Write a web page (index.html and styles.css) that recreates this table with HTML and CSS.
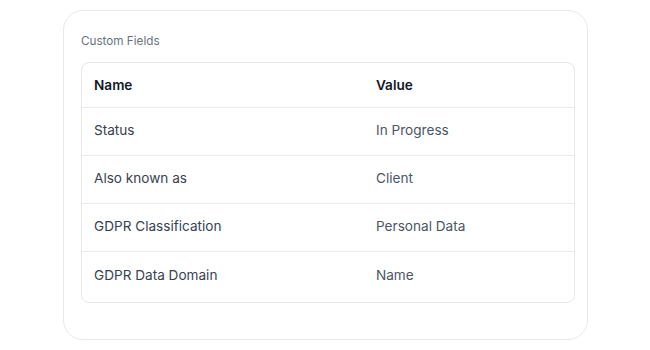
FILE: index.html
```html
<!DOCTYPE html>
<html lang="en">
<head>
    <meta charset="UTF-8">
    <meta name="viewport" content="width=device-width, initial-scale=1.0">
    <title>Custom Fields</title>
    <link rel="stylesheet" href="styles.css">
</head>
<body>
    <div class="card">
        <div class="card-title">Custom Fields</div>
        <div class="fields-table">
            <div class="row header">
                <div class="cell name">Name</div>
                <div class="cell value">Value</div>
            </div>
            <div class="row">
                <div class="cell name">Status</div>
                <div class="cell value">In Progress</div>
            </div>
            <div class="row">
                <div class="cell name">Also known as</div>
                <div class="cell value">Client</div>
            </div>
            <div class="row">
                <div class="cell name">GDPR Classification</div>
                <div class="cell value">Personal Data</div>
            </div>
            <div class="row">
                <div class="cell name">GDPR Data Domain</div>
                <div class="cell value">Name</div>
            </div>
        </div>
    </div>
</body>
</html>
```

FILE: styles.css
```css
body {
    font-family: Inter, "Noto Sans", sans-serif;
    margin: 0;
    padding: 10px 0 0 63px;
    background-color: #fff;
}
.card {
    width: 494px;
    padding: 22px 12px 36px 17px;
    border: 1px solid #e8e8ea;
    border-radius: 20px;
    background-color: #fff;
}
.card-title {
    font-size: 11.7px;
    line-height: 16px;
    color: #6b7280;
    margin-bottom: 13px;
}
.fields-table {
    border: 1px solid #e8e8ea;
    border-radius: 8px;
}
.row {
    display: grid;
    grid-template-columns: 282px 1fr;
    align-items: center;
    height: 48px;
    padding-bottom: 3px;
    box-sizing: border-box;
    border-bottom: 1px solid #ebebed;
    font-size: 13.6px;
}
.row:last-child {
    border-bottom: none;
    height: 50px;
    padding-bottom: 4px;
}
.row.header {
    height: 45px;
    padding-bottom: 1px;
}
.cell {
    padding: 0 12px;
}
.name {
    color: #374151;
}
.value {
    color: #4b5563;
}
.header .cell {
    font-weight: 600;
    color: #111827;
}
```
